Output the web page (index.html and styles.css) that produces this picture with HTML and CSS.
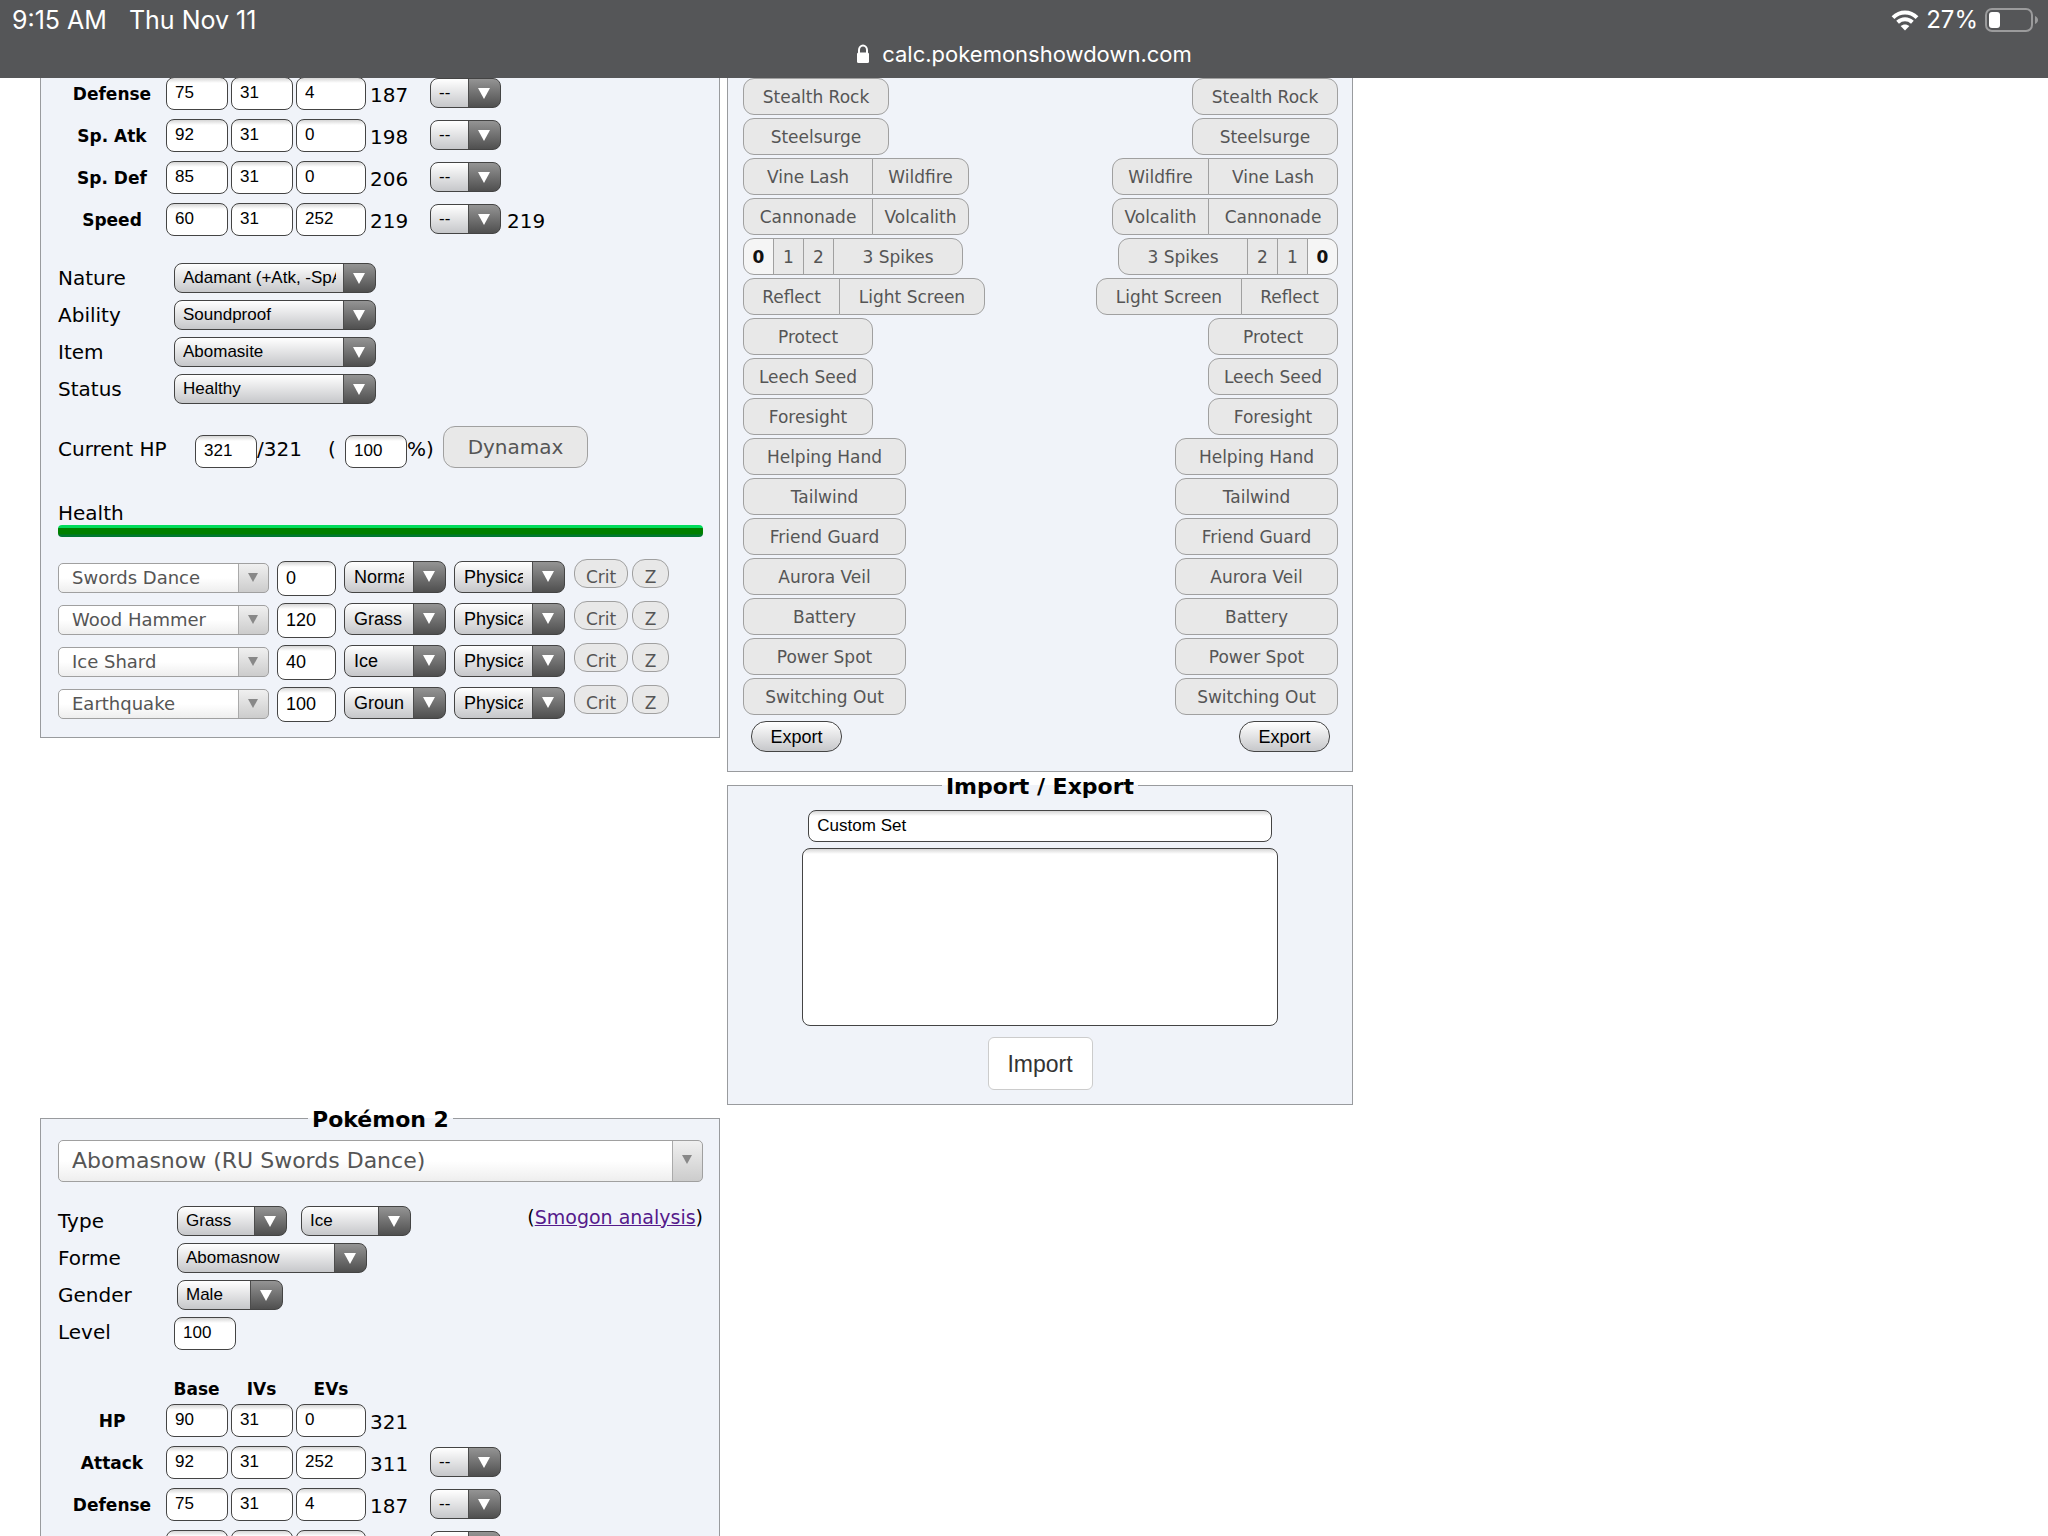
FILE: index.html
```html
<!DOCTYPE html>
<html lang="en">
<head>
<meta charset="utf-8">
<title>Pokémon Damage Calculator</title>
<link rel="stylesheet" href="styles.css">
</head>
<body>
<header class="bar">
  <div class="bar-status">
    <div class="bar-left"><span>9:15 AM</span><span>Thu Nov 11</span></div>
    <div class="bar-right">
      <svg class="wifi" viewBox="0 0 28 21" aria-hidden="true"><path d="M2 7.6C9 .9 19 .9 26 7.6" /><path d="M6.6 12.2c4.400-4 10.400-4 14.800 0" /><path class="dot" d="M14 20.500l-4.400-4.400c2.600-2.100 6.200-2.100 8.800 0z" /></svg>
      <span>27%</span>
      <svg class="battery" viewBox="0 0 54 24" aria-hidden="true"><rect class="shell" x="1" y="1" width="46" height="22" rx="6" /><rect class="charge" x="4" y="4" width="11" height="16" rx="3" /><path class="nub" d="M50 8c4 1.500 4 6.500 0 8z" /></svg>
    </div>
  </div>
  <div class="bar-url">
    <svg class="lock" viewBox="0 0 14 20" aria-hidden="true"><path class="shackle" d="M3 9V6a4 4.500 0 0 1 8 0v3" /><rect x="1" y="8.500" width="12" height="10.500" rx="1.500" /></svg>
    <span>calc.pokemonshowdown.com</span>
  </div>
</header>

<main class="calc">
  <section class="panel panel-cut poke" aria-label="Pokémon 1">
    <table class="stats">
      <tr><th scope="row">Defense</th><td><input class="num" aria-label="Defense base" value="75"></td><td><input class="num" aria-label="Defense IVs" value="31"></td><td><input class="num num-ev" aria-label="Defense EVs" value="4"></td><td class="total">187</td><td><select class="pick boost" aria-label="Defense boost"><option>--</option></select></td><td></td></tr>
      <tr><th scope="row">Sp. Atk</th><td><input class="num" aria-label="Sp. Atk base" value="92"></td><td><input class="num" aria-label="Sp. Atk IVs" value="31"></td><td><input class="num num-ev" aria-label="Sp. Atk EVs" value="0"></td><td class="total">198</td><td><select class="pick boost" aria-label="Sp. Atk boost"><option>--</option></select></td><td></td></tr>
      <tr><th scope="row">Sp. Def</th><td><input class="num" aria-label="Sp. Def base" value="85"></td><td><input class="num" aria-label="Sp. Def IVs" value="31"></td><td><input class="num num-ev" aria-label="Sp. Def EVs" value="0"></td><td class="total">206</td><td><select class="pick boost" aria-label="Sp. Def boost"><option>--</option></select></td><td></td></tr>
      <tr><th scope="row">Speed</th><td><input class="num" aria-label="Speed base" value="60"></td><td><input class="num" aria-label="Speed IVs" value="31"></td><td><input class="num num-ev" aria-label="Speed EVs" value="252"></td><td class="total">219</td><td><select class="pick boost" aria-label="Speed boost"><option>--</option></select></td><td class="total">219</td></tr>
    </table>

    <div class="fields">
      <div class="field"><label for="nature">Nature</label><select class="pick pick-long" id="nature"><option>Adamant (+Atk, -SpA)</option></select></div>
      <div class="field"><label for="ability">Ability</label><select class="pick pick-long" id="ability"><option>Soundproof</option></select></div>
      <div class="field"><label for="item">Item</label><select class="pick pick-long" id="item"><option>Abomasite</option></select></div>
      <div class="field"><label for="status">Status</label><select class="pick pick-long" id="status"><option>Healthy</option></select></div>
    </div>

    <div class="hp">
      <label class="hp-label" for="hp">Current HP</label>
      <input class="num" id="hp" value="321"><span class="hp-max">/321</span>
      <span class="hp-open">(</span><input class="num" aria-label="HP percent" value="100"><span class="hp-close">%)</span>
      <button class="toggle dynamax" type="button">Dynamax</button>
    </div>

    <div class="health">Health</div>
    <div class="health-bar"></div>

    <div class="moves">
      <div class="move"><select class="search" aria-label="Move 1"><option>Swords Dance</option></select><input class="num power" aria-label="Power 1" value="0"><select class="pick type" aria-label="Type 1"><option>Normal</option></select><select class="pick category" aria-label="Category 1"><option>Physical</option></select><button class="toggle crit" type="button">Crit</button><button class="toggle zmove" type="button">Z</button></div>
      <div class="move"><select class="search" aria-label="Move 2"><option>Wood Hammer</option></select><input class="num power" aria-label="Power 2" value="120"><select class="pick type" aria-label="Type 2"><option>Grass</option></select><select class="pick category" aria-label="Category 2"><option>Physical</option></select><button class="toggle crit" type="button">Crit</button><button class="toggle zmove" type="button">Z</button></div>
      <div class="move"><select class="search" aria-label="Move 3"><option>Ice Shard</option></select><input class="num power" aria-label="Power 3" value="40"><select class="pick type" aria-label="Type 3"><option>Ice</option></select><select class="pick category" aria-label="Category 3"><option>Physical</option></select><button class="toggle crit" type="button">Crit</button><button class="toggle zmove" type="button">Z</button></div>
      <div class="move"><select class="search" aria-label="Move 4"><option>Earthquake</option></select><input class="num power" aria-label="Power 4" value="100"><select class="pick type" aria-label="Type 4"><option>Ground</option></select><select class="pick category" aria-label="Category 4"><option>Physical</option></select><button class="toggle crit" type="button">Crit</button><button class="toggle zmove" type="button">Z</button></div>
    </div>
  </section>

  <div class="middle">
    <section class="panel panel-cut field-panel" aria-label="Field">
      <div class="side">
        <button class="toggle w-l" type="button">Stealth Rock</button>
        <button class="toggle w-l" type="button">Steelsurge</button>
        <div class="group"><button class="toggle w-m" type="button">Vine Lash</button><button class="toggle w-s" type="button">Wildfire</button></div>
        <div class="group"><button class="toggle w-m" type="button">Cannonade</button><button class="toggle w-s" type="button">Volcalith</button></div>
        <div class="group"><button class="toggle w-xs on" type="button" aria-pressed="true">0</button><button class="toggle w-xs" type="button">1</button><button class="toggle w-xs" type="button">2</button><button class="toggle w-m" type="button">3 Spikes</button></div>
        <div class="group"><button class="toggle w-s" type="button">Reflect</button><button class="toggle w-l" type="button">Light Screen</button></div>
        <button class="toggle w-m" type="button">Protect</button>
        <button class="toggle w-m" type="button">Leech Seed</button>
        <button class="toggle w-m" type="button">Foresight</button>
        <button class="toggle w-xl" type="button">Helping Hand</button>
        <button class="toggle w-xl" type="button">Tailwind</button>
        <button class="toggle w-xl" type="button">Friend Guard</button>
        <button class="toggle w-xl" type="button">Aurora Veil</button>
        <button class="toggle w-xl" type="button">Battery</button>
        <button class="toggle w-xl" type="button">Power Spot</button>
        <button class="toggle w-xl" type="button">Switching Out</button>
        <button class="export" type="button">Export</button>
      </div>
      <div class="side side-right">
        <button class="toggle w-l" type="button">Stealth Rock</button>
        <button class="toggle w-l" type="button">Steelsurge</button>
        <div class="group"><button class="toggle w-s" type="button">Wildfire</button><button class="toggle w-m" type="button">Vine Lash</button></div>
        <div class="group"><button class="toggle w-s" type="button">Volcalith</button><button class="toggle w-m" type="button">Cannonade</button></div>
        <div class="group"><button class="toggle w-m" type="button">3 Spikes</button><button class="toggle w-xs" type="button">2</button><button class="toggle w-xs" type="button">1</button><button class="toggle w-xs on" type="button" aria-pressed="true">0</button></div>
        <div class="group"><button class="toggle w-l" type="button">Light Screen</button><button class="toggle w-s" type="button">Reflect</button></div>
        <button class="toggle w-m" type="button">Protect</button>
        <button class="toggle w-m" type="button">Leech Seed</button>
        <button class="toggle w-m" type="button">Foresight</button>
        <button class="toggle w-xl" type="button">Helping Hand</button>
        <button class="toggle w-xl" type="button">Tailwind</button>
        <button class="toggle w-xl" type="button">Friend Guard</button>
        <button class="toggle w-xl" type="button">Aurora Veil</button>
        <button class="toggle w-xl" type="button">Battery</button>
        <button class="toggle w-xl" type="button">Power Spot</button>
        <button class="toggle w-xl" type="button">Switching Out</button>
        <button class="export" type="button">Export</button>
      </div>
    </section>

    <fieldset class="panel transfer">
      <legend>Import / Export</legend>
      <div class="transfer-body">
        <input class="num set-name" aria-label="Set name" value="Custom Set">
        <textarea class="set-text" aria-label="Set text"></textarea>
        <button class="import" type="button">Import</button>
      </div>
    </fieldset>
  </div>

  <fieldset class="panel poke">
    <legend>Pokémon 2</legend>
    <select class="search species" aria-label="Pokémon 2 set"><option>Abomasnow (RU Swords Dance)</option></select>
    <div class="info">
      <div class="fields">
        <div class="field"><label for="type1">Type</label><div class="types"><select class="pick pick-type" id="type1"><option>Grass</option></select><select class="pick pick-type" aria-label="Second type"><option>Ice</option></select></div></div>
        <div class="field"><label for="forme">Forme</label><select class="pick pick-in pick-forme" id="forme"><option>Abomasnow</option></select></div>
        <div class="field"><label for="gender">Gender</label><select class="pick pick-in pick-gender" id="gender"><option>Male</option></select></div>
        <div class="field"><label for="level">Level</label><input class="num" id="level" value="100"></div>
      </div>
      <span class="analysis">(<a href="#analysis">Smogon analysis</a>)</span>
    </div>
    <table class="stats">
      <tr class="stats-head"><td></td><th scope="col">Base</th><th scope="col">IVs</th><th scope="col">EVs</th><td></td><td></td><td></td></tr>
      <tr><th scope="row">HP</th><td><input class="num" aria-label="HP base" value="90"></td><td><input class="num" aria-label="HP IVs" value="31"></td><td><input class="num num-ev" aria-label="HP EVs" value="0"></td><td class="total">321</td><td></td><td></td></tr>
      <tr><th scope="row">Attack</th><td><input class="num" aria-label="Attack base" value="92"></td><td><input class="num" aria-label="Attack IVs" value="31"></td><td><input class="num num-ev" aria-label="Attack EVs" value="252"></td><td class="total">311</td><td><select class="pick boost" aria-label="Attack boost"><option>--</option></select></td><td></td></tr>
      <tr><th scope="row">Defense</th><td><input class="num" aria-label="Defense base" value="75"></td><td><input class="num" aria-label="Defense IVs" value="31"></td><td><input class="num num-ev" aria-label="Defense EVs" value="4"></td><td class="total">187</td><td><select class="pick boost" aria-label="Defense boost"><option>--</option></select></td><td></td></tr>
      <tr><td></td><td><input class="num" aria-label="Sp. Atk base" value="92"></td><td><input class="num" aria-label="Sp. Atk IVs" value="31"></td><td><input class="num num-ev" aria-label="Sp. Atk EVs" value="0"></td><td></td><td><select class="pick boost" aria-label="Sp. Atk boost"><option>--</option></select></td><td></td></tr>
    </table>
  </fieldset>
</main>
</body>
</html>
```
FILE: styles.css
```css
* { box-sizing: border-box; }

body {
  margin: 0;
  height: 100vh;
  overflow: hidden;
  background: #fff;
  color: #000;
  font: 20px/24px "DejaVu Sans", Verdana, sans-serif;
}

button, input, select, textarea { margin: 0; font: inherit; color: inherit; }

/* Browser bar */
.bar {
  position: relative;
  z-index: 1;
  height: 78px;
  background: #555658;
  color: #fff;
  font: 24px/28px Inter, sans-serif;
}
.bar-status {
  display: flex;
  justify-content: space-between;
  padding: 6px 9px 0 12px;
}
.bar-left { display: flex; gap: 22px; font-size: 25px; }
.bar-right { display: flex; align-items: center; gap: 7px; }
.bar-url {
  display: flex;
  justify-content: center;
  align-items: center;
  gap: 12px;
  padding-top: 6px;
  font-size: 22px;
}
.wifi { width: 28px; height: 21px; fill: none; stroke: #fff; stroke-width: 4; }
.wifi .dot { fill: #fff; stroke: none; }
.battery { width: 54px; height: 24px; fill: #fff; }
.battery .shell { fill: none; stroke: #9b9b9c; stroke-width: 2; }
.battery .nub { fill: #9b9b9c; }
.lock { width: 14px; height: 20px; fill: #fff; }
.lock .shackle { fill: none; stroke: #fff; stroke-width: 2; }

/* Page grid */
.calc {
  display: grid;
  grid-template-columns: 34% 31.3%;
  column-gap: 7px;
  align-items: start;
  margin-top: -1px;
  padding: 0 8px 0 40px;
}
.panel {
  margin: 0;
  min-width: 0;
  border: 1px solid #999b9e;
  background: #f0f3f9;
}
.panel-cut { border-top: 0; }
.poke { padding: 0 16px 15px 17px; }
fieldset.poke { padding-top: 9px; }
legend {
  margin: 0 auto;
  padding: 4px 4px 0;
  font-size: 22px;
  line-height: 22px;
  font-weight: bold;
}

/* Text boxes and drop-downs */
.num, .set-text {
  border: 1px solid #444;
  border-radius: 8px;
  background: #fff linear-gradient(#d6d6d6, #fff) no-repeat 0 0 / 100% 5px;
  font-family: "Liberation Sans", Arial, sans-serif;
  font-size: 17px;
}
.num {
  display: block;
  width: 62px;
  height: 33px;
  padding: 0 8px 1px;
}
.num-ev { width: 70px; }
.pick {
  appearance: none;
  display: block;
  height: 30px;
  padding: 0 39px 0 8px;
  border: 1px solid #444;
  border-radius: 8px;
  background:
    url("data:image/svg+xml,%3Csvg xmlns='http://www.w3.org/2000/svg' viewBox='0 0 12 11'%3E%3Cpath d='M0 0h12L6 11z' fill='white'/%3E%3C/svg%3E") no-repeat right 10px top 9px / 12px 11px,
    linear-gradient(#4c4c4c, #4c4c4c) no-repeat right 31px top 0 / 1px 100%,
    linear-gradient(#949494, #4f4f4f) no-repeat right 0 top 0 / 31px 100%,
    linear-gradient(#fff, #c6c7ca);
  font-family: "Liberation Sans", Arial, sans-serif;
  font-size: 17px;
}
.search {
  appearance: none;
  display: block;
  width: 211px;
  height: 30px;
  padding: 0 32px 0 13px;
  border: 1px solid #a0a0a0;
  border-radius: 5px;
  background:
    url("data:image/svg+xml,%3Csvg xmlns='http://www.w3.org/2000/svg' viewBox='0 0 10 9'%3E%3Cpath d='M0 0h10L5 9z' fill='%23888'/%3E%3C/svg%3E") no-repeat right 10px top 45% / 10px 9px,
    linear-gradient(#aaa, #aaa) no-repeat right 29px top 0 / 1px 100%,
    linear-gradient(#f0f0f0, #ccc) no-repeat right 0 top 0 / 29px 100%,
    linear-gradient(#fff 50%, #eee);
  color: #555;
  font-size: 18px;
}

/* Stats table */
.stats { border-collapse: collapse; table-layout: fixed; width: 504px; }
.stats tr { height: 42px; vertical-align: top; }
.stats th, .stats td { padding: 0; width: 65px; }
.stats th { font-size: 17px; line-height: 35px; }
.stats tr > :first-child { width: 108px; }
.stats tr > :nth-child(4) { width: 74px; }
.stats tr > :nth-child(5) { width: 60px; }
.stats tr > :nth-child(6) { width: 77px; }
.stats .total { line-height: 37px; }
.stats .stats-head { height: 29px; }
.stats-head th { padding-right: 4px; line-height: 29px; }
.boost { width: 71px; margin-top: 1px; padding-right: 33px; }

/* Labelled fields */
.fields { display: grid; grid-auto-rows: 37px; }
.stats + .fields { margin-top: 18px; }
.field { display: grid; grid-template-columns: 116px auto; align-items: start; justify-content: start; }
.field label { line-height: 30px; }
.pick-long { width: 202px; }
.types { display: flex; gap: 14px; margin-left: 3px; }
.pick-in { margin-left: 3px; }
.pick-type { width: 110px; }
.pick-forme { width: 190px; }
.pick-gender { width: 106px; }
.species { width: 100%; height: 42px; font-size: 22px; }
.info { display: flex; justify-content: space-between; margin: 24px 0 21px; }
.analysis { font-size: 19px; line-height: 22px; }
.analysis a { color: #551a8b; }

/* Current HP */
.hp { display: flex; align-items: flex-end; margin-top: 15px; }
.hp > label, .hp > span { line-height: 38px; }
.hp-label { width: 137px; }
.hp-max { width: 71px; }
.hp-open { width: 17px; }
.hp-close { width: 36px; }
.health { margin-top: 33px; }
.health-bar {
  height: 12px;
  border-radius: 4px;
  background: linear-gradient(#00dc5c 3px, #008000 3px, #008000 9px, #007832 10px);
}

/* Moves */
.moves { display: grid; gap: 7px; margin-top: 24px; }
.move { display: flex; height: 35px; }
.move .search { margin: 2px 8px 0 0; }
.power { height: 35px; width: 59px; font-size: 18px; padding-bottom: 0; }
.move .pick { height: 32px; margin-left: 8px; padding: 0 41px 0 9px; font-size: 18px; }
.move .type { width: 102px; }
.move .category { width: 111px; }

/* Toggles */
.toggle {
  height: 37px;
  padding: 0;
  border: 1px solid #a0a0a0;
  border-radius: 11px;
  background: #e8e8e8;
  color: #555;
  font-size: 17px;
}
.toggle.on { background: #f5f5f5; color: #111; font-weight: bold; }
.dynamax { width: 145px; height: 42px; border-radius: 12px; font-size: 20px; }
.crit, .zmove { height: 29px; margin: -2px 0 0 9px; padding-top: 7px; border-radius: 13px; line-height: 20px; }
.crit { width: 54px; }
.zmove { width: 37px; margin-left: 4px; }
.w-xs { width: 31px; }
.w-s { width: 97px; }
.w-m { width: 130px; }
.w-l { width: 146px; }
.w-xl { width: 163px; }

/* Field panel */
.field-panel { display: flex; justify-content: space-between; padding: 1px 14px 19px 15px; }
.side { display: flex; flex-direction: column; align-items: flex-start; gap: 3px; }
.side-right { align-items: flex-end; }
.group { display: flex; }
.group .toggle { border-radius: 0; }
.group .toggle + .toggle { margin-left: -1px; }
.group .toggle:first-child { border-radius: 11px 0 0 11px; }
.group .toggle:last-child { border-radius: 0 11px 11px 0; }
.export {
  width: 91px;
  height: 31px;
  margin: 3px 8px 0;
  padding: 0;
  border: 1px solid #444;
  border-radius: 15px;
  background: linear-gradient(#fff, #c6c7ca);
  font: 18px/24px "Liberation Sans", Arial, sans-serif;
}

/* Import panel */
.transfer { padding: 12px 15px 14px; }
.transfer-body { display: flex; flex-direction: column; align-items: center; }
.set-name { width: 78%; height: 32px; padding: 0 8px; }
.set-text { width: 80%; height: 178px; margin: 6px 0 11px; resize: none; }
.import {
  width: 105px;
  height: 53px;
  border: 1px solid #ccc;
  border-radius: 6px;
  background: #fff;
  color: #333;
  font: 23px/28px "Liberation Sans", Arial, sans-serif;
}
```
